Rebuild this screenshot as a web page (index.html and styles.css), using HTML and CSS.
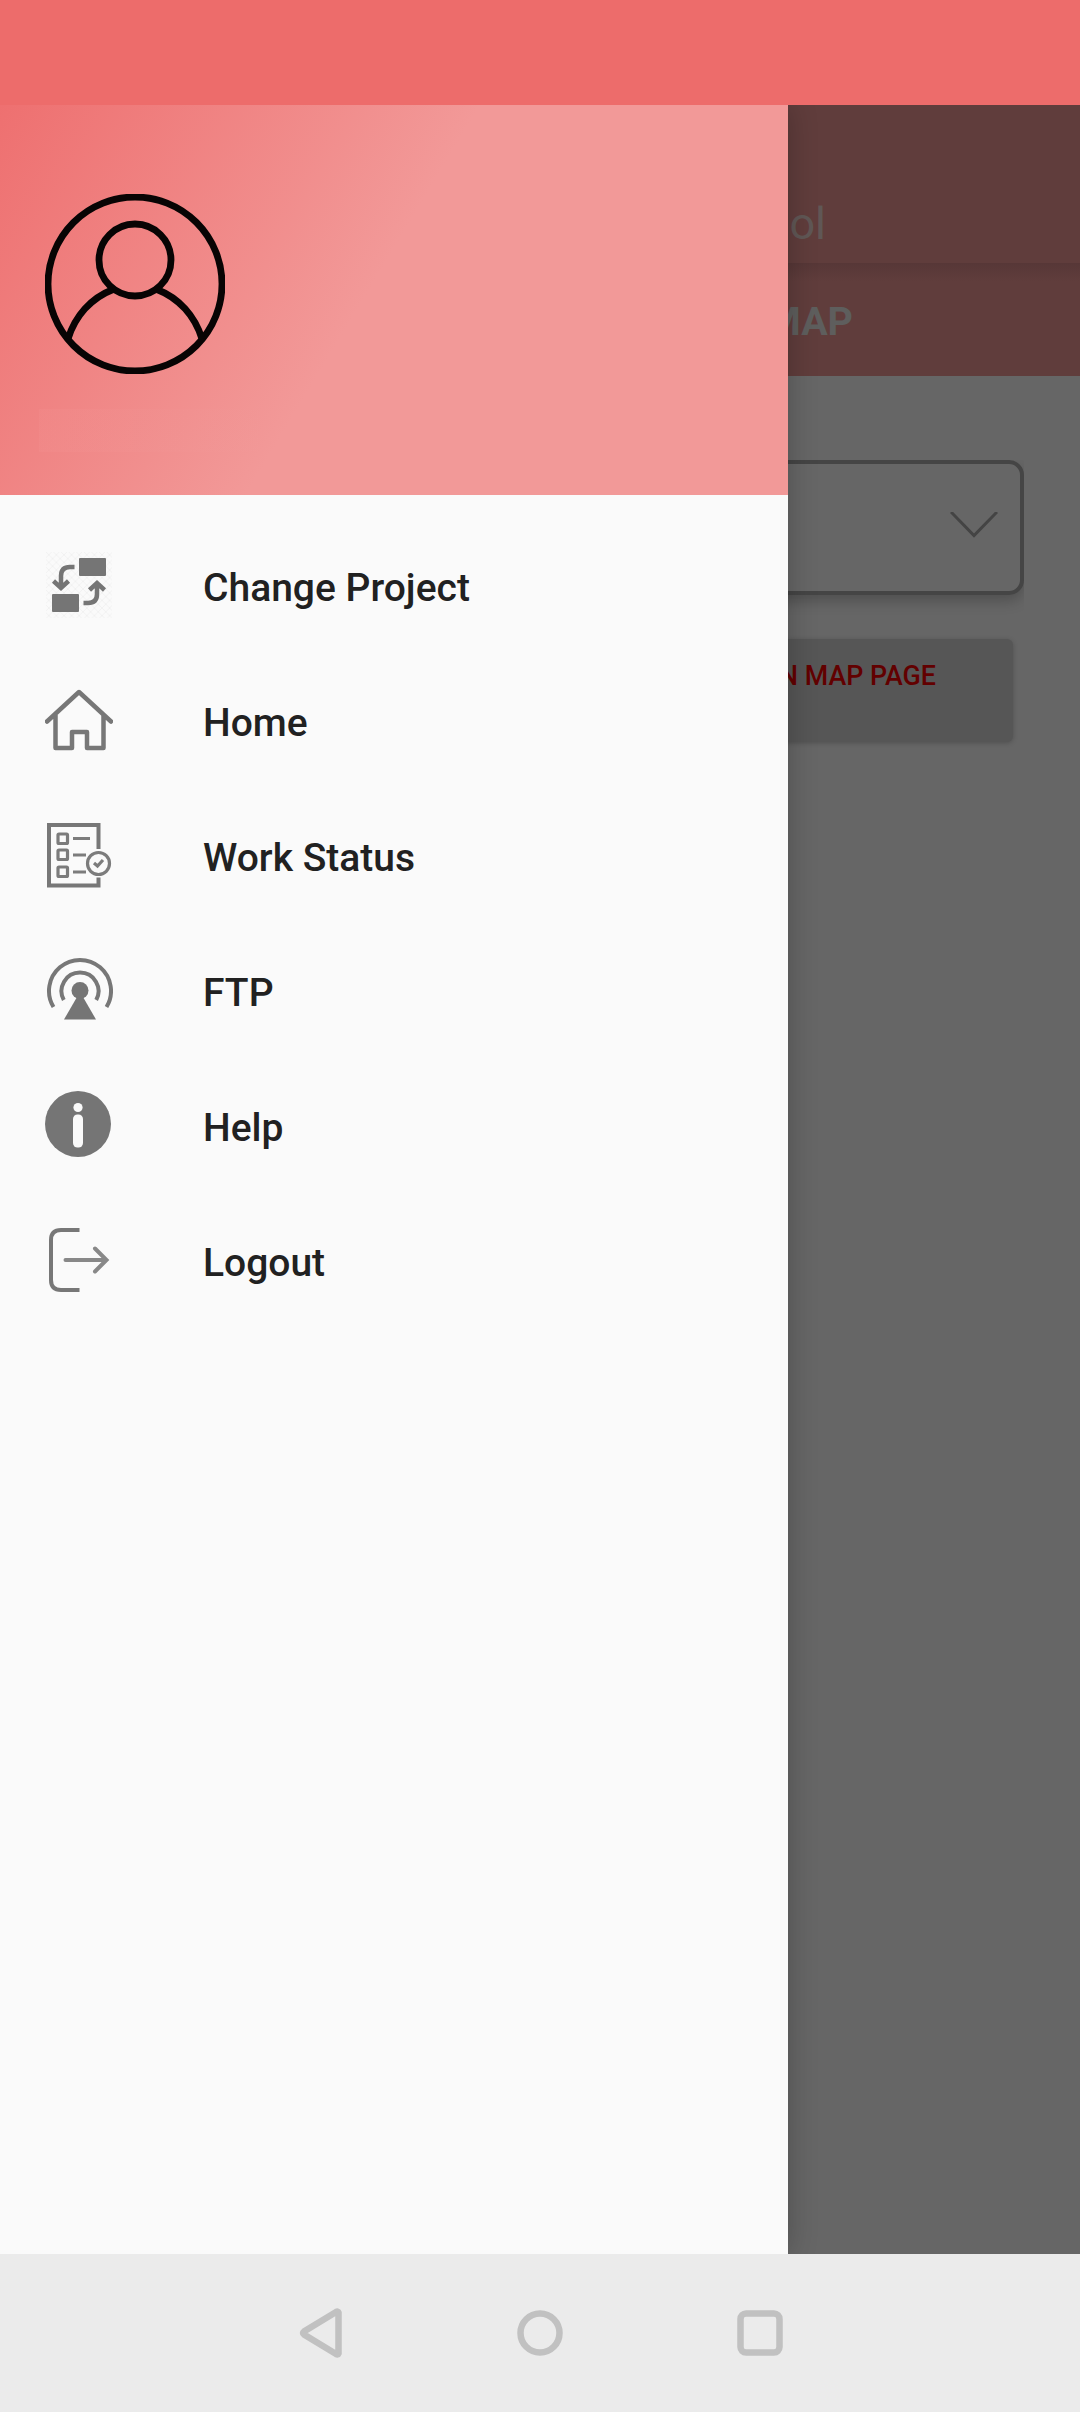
FILE: index.html
```html
<!DOCTYPE html>
<html lang="en">
<head>
<meta charset="utf-8">
<title>Menu</title>
<link rel="stylesheet" href="styles.css">
</head>
<body>
<div class="status-bar"></div>
<div class="stage">
  <main class="page">
    <header class="toolbar"><h1 class="toolbar-title">ol</h1></header>
    <div class="tabs"><span class="tab">MAP</span></div>
    <div class="content">
      <div class="select-clip">
        <div class="select">
          <svg class="chevron" viewBox="0 0 48 26"><path d="M1 0 24 23.500 47 0"/></svg>
        </div>
      </div>
      <div class="button">N MAP PAGE</div>
    </div>
  </main>
  <aside class="drawer">
    <div class="drawer-header">
      <svg class="avatar" viewBox="0 0 180 180">
        <circle cx="90" cy="90" r="87"/>
        <circle cx="90" cy="66" r="36"/>
        <path d="M68 95.500C46 104 30 122 23 145M112 95.500C134 104 150 122 157 145"/>
      </svg>
      <div class="account"></div>
    </div>
    <nav class="menu">
      <a class="item">
        <svg class="icon" viewBox="0 0 68 68">
          <defs><pattern id="mesh" width="7.6" height="7.6" patternUnits="userSpaceOnUse"><path d="M0 0 7.6 7.6M7.6 0 0 7.6" stroke="#f0f0f0" stroke-width=".8"/></pattern></defs>
          <rect x="1" y="1" width="66" height="66" fill="url(#mesh)"/>
          <g fill="#757575"><rect x="34" y="7" width="27" height="18" rx="1"/><rect x="7" y="43" width="27" height="18" rx="1"/></g>
          <g class="thick"><path d="M29.500 16H25Q16 16 16 25V36M8.500 30 16 37 23.500 30M38.500 52H43Q52 52 52 43V32M44.500 39 52 32 59.500 39"/></g>
        </svg>
        <span class="label">Change Project</span>
      </a>
      <a class="item">
        <svg class="icon" viewBox="0 0 68 68">
          <path class="line home" d="M2 35.500 34 6 66 35.500M10.500 29V62H27V46H42V62H58.500V29"/>
        </svg>
        <span class="label">Home</span>
      </a>
      <a class="item">
        <svg class="icon" viewBox="0 0 68 68">
          <path class="line" d="M53.500 28V4H4V64.500H53.500V56.500"/>
          <g class="line fine"><rect x="13" y="13" width="9.500" height="9.500" rx="1"/><rect x="13" y="29" width="9.500" height="9.500" rx="1"/><rect x="13" y="46" width="9.500" height="9.500" rx="1"/><path d="M28 17.500H45M28 34H41M28 51H41"/><circle cx="53.500" cy="42.500" r="11"/><path d="M49 42 52.500 45 58 39"/></g>
        </svg>
        <span class="label">Work Status</span>
      </a>
      <a class="item">
        <svg class="icon" viewBox="0 0 68 68">
          <path class="line" d="M8.500 51A31 31 0 1 1 61.500 51M18.800 44A18.500 18.500 0 1 1 51.200 44"/>
          <circle cx="35" cy="34.500" r="8.500" fill="#757575"/><path d="M32 41H38L51 63.500H19Z" fill="#757575"/>
        </svg>
        <span class="label">FTP</span>
      </a>
      <a class="item">
        <svg class="icon" viewBox="0 0 68 68">
          <circle cx="33" cy="33" r="33" fill="#757575"/><circle cx="33" cy="16.500" r="4.600" fill="#fafafa"/><rect x="28" y="23.500" width="10" height="33" rx="4.500" fill="#fafafa"/>
        </svg>
        <span class="label">Help</span>
      </a>
      <a class="item">
        <svg class="icon" viewBox="0 0 68 68">
          <path class="line exit" d="M34.500 4H16Q6 4 6 14V54Q6 64 16 64H34.500"/><path class="line exit-arrow" d="M20.500 34H61M50 22.500 61.500 34 50 45.500"/>
        </svg>
        <span class="label">Logout</span>
      </a>
    </nav>
  </aside>
</div>
<footer class="system-nav">
  <svg class="nav-icon" viewBox="0 0 50 50"><path d="M43.500 4.500V45.500Q43 47 41 46L9 26.500Q7 25 9 23.500L41 4Q43 3 43.500 4.500Z"/></svg>
  <svg class="nav-icon" viewBox="0 0 50 50"><circle cx="25" cy="25" r="19.500"/></svg>
  <svg class="nav-icon" viewBox="0 0 50 50"><rect x="5.500" y="5.500" width="39" height="39" rx="5.500"/></svg>
</footer>
</body>
</html>
```
FILE: styles.css
```css
* { box-sizing: border-box; }
body {
  margin: 0;
  width: 1080px;
  height: 2412px;
  display: flex;
  flex-direction: column;
  overflow: hidden;
  font-family: Roboto, "Liberation Sans", sans-serif;
}
svg { display: block; fill: none; flex: none; }
.status-bar { height: 105px; background: #ed6c6b; }
.stage { position: relative; height: 2149px; }
.page { height: 100%; background: #666; }
.toolbar {
  height: 158px;
  padding: 91px 254px 0 0;
  background: #603d3c;
  text-align: right;
}
.toolbar-title { margin: 0; font-size: 45px; font-weight: 400; line-height: 56px; color: #605755; }
.tabs {
  height: 113px;
  padding: 36px 227px 0 0;
  background: linear-gradient(#573737, #603d3c 18px);
  text-align: right;
}
.tab { display: block; font-size: 39.4px; line-height: 46px; font-weight: 700; color: #5e5e5d; }
.content { padding: 84px 56px 0 0; }
.select-clip { height: 165px; overflow: hidden; }
.select {
  display: flex;
  justify-content: flex-end;
  height: 135px;
  padding: 48px 22px 0 0;
  border: 4px solid #454545;
  border-radius: 15px;
  box-shadow: 0 6px 14px rgba(0, 0, 0, .22);
  background: #666;
}
.chevron { width: 48px; height: 26px; stroke: #444; stroke-width: 3; }
.button {
  height: 103px;
  margin: 14px 11px 0 0;
  padding: 20px 77px 0 0;
  border-radius: 6px;
  background: #565656;
  box-shadow: 0 1px 5px rgba(0, 0, 0, .22);
  font-size: 26.800px;
  line-height: 34px;
  font-weight: 500;
  text-align: right;
  color: #620000;
}
.drawer {
  position: absolute;
  top: 0;
  left: 0;
  width: 788px;
  height: 100%;
  background: #fafafa;
  box-shadow: 0 0 28px rgba(0, 0, 0, .24);
  clip-path: inset(0 -40px 0 0);
}
.drawer-header {
  height: 390px;
  padding: 89px 45px 0;
  background: linear-gradient(121deg, #ee7070, #f29998 47%);
}
.avatar { width: 180px; height: 180px; stroke: #080404; stroke-width: 6.800px; }
.account {
  width: 240px;
  height: 43px;
  margin: 35px 0 0 -6px;
  background: linear-gradient(90deg, rgba(255, 190, 190, .06), rgba(255, 190, 190, 0));
}
.menu { padding-top: 22px; }
.item { display: flex; align-items: center; gap: 90px; height: 135px; padding-left: 45px; }
.icon { width: 68px; height: 68px; }
.label { padding-top: 6px; font-size: 39px; line-height: 46px; font-weight: 500; color: #212121; }
.thick { stroke: #757575; stroke-width: 4.500; }
.line { stroke: #777; stroke-width: 4; }
.home { stroke-width: 4.500; stroke-linecap: round; stroke-linejoin: round; }
.fine { stroke-width: 3.200; stroke: #7c7c7c; }
.exit { stroke-width: 4; }
.exit-arrow { stroke-width: 4; stroke: #888; stroke-linecap: round; }
.system-nav {
  display: flex;
  justify-content: center;
  gap: 170px;
  height: 158px;
  padding-top: 54px;
  background: #ebebeb;
}
.nav-icon { width: 50px; height: 50px; stroke: #c1c1c1; stroke-width: 6.500; }
```
